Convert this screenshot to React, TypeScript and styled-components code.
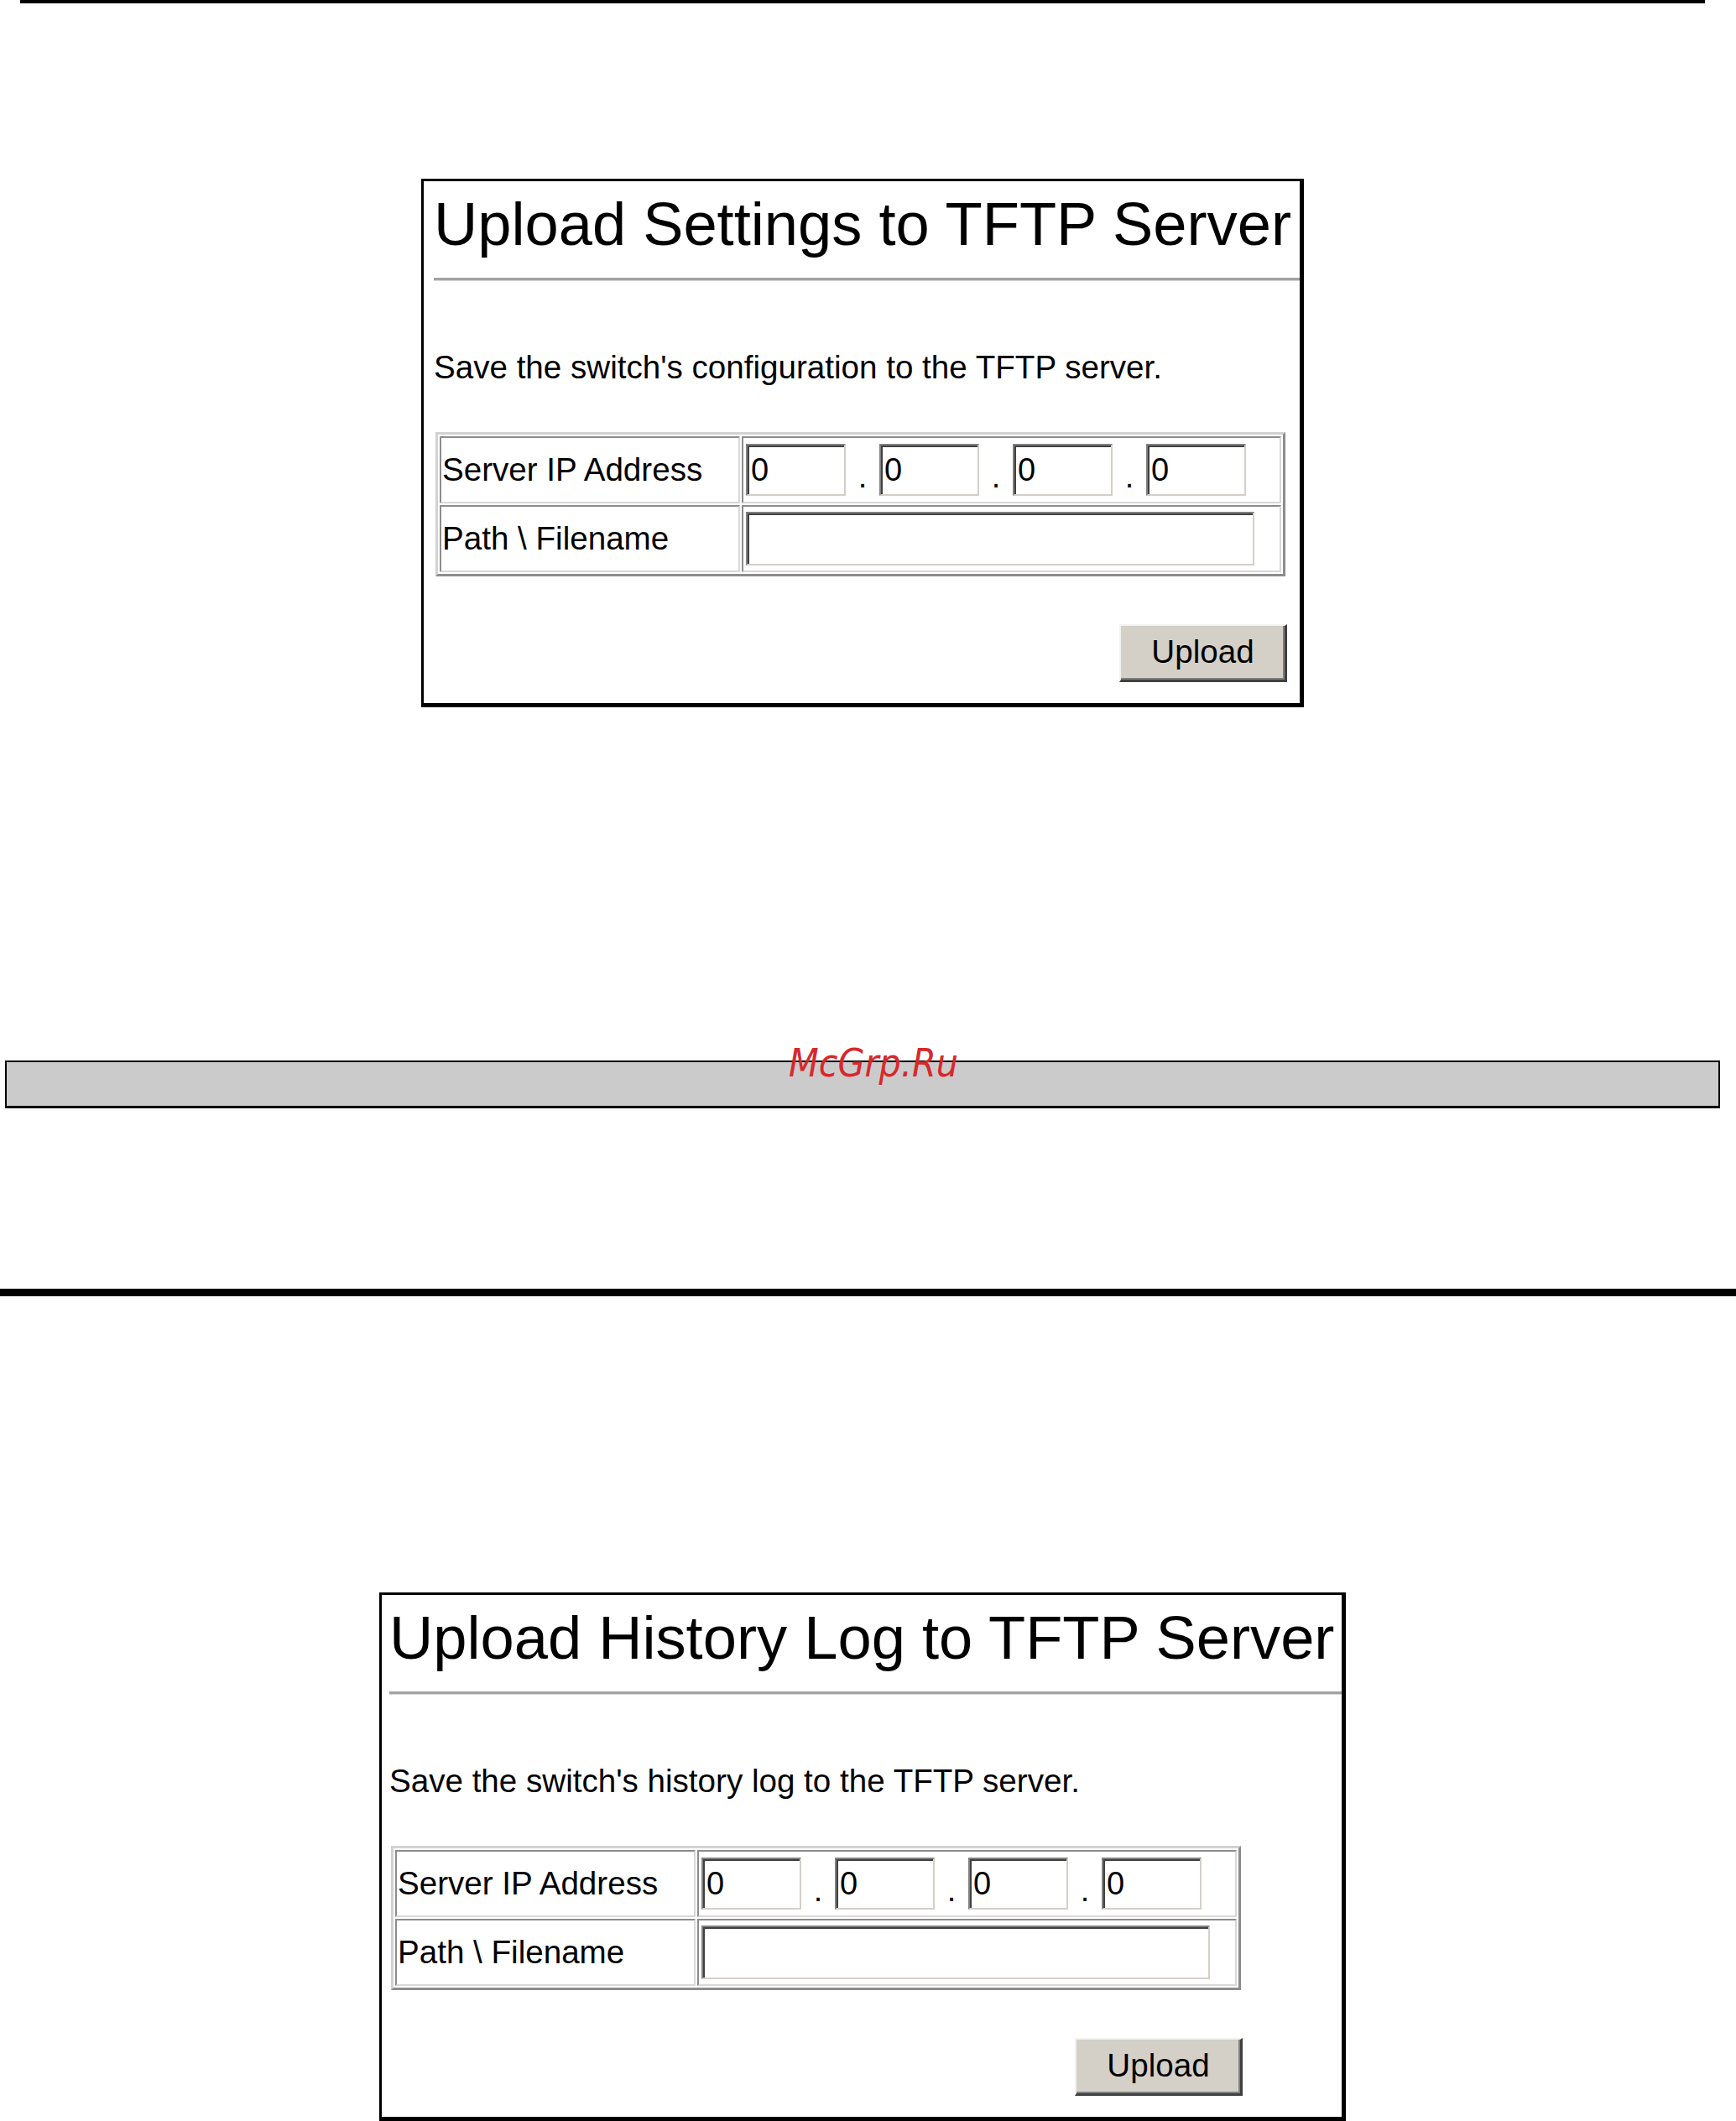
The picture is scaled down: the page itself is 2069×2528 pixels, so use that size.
import React from 'react';
import styled, { createGlobalStyle } from 'styled-components';

const GlobalStyle = createGlobalStyle`
    *, *::before, *::after {
        box-sizing: border-box;
    }
    html, body {
        margin: 0;
        padding: 0;
        background: #ffffff;
        overflow: hidden;
    }
    body {
        font-family: "Liberation Sans", Arial, sans-serif;
        color: #000000;
    }
`

const Page = styled.div`
    width: 2069px;
    display: flex;
    flex-direction: column;
`

const TopRule = styled.div`
    height: 4px;
    margin: 0 37px 0 24px;
    background: #000000;
`

const PanelRow = styled.div<{ $gap: number }>`
    margin: ${p => p.$gap}px 37px 0 24px;
    display: flex;
    justify-content: center;
`

const Panel = styled.div<{ $width: number; $padLeft: number }>`
    width: ${p => p.$width}px;
    border-style: solid;
    border-color: #000000;
    border-width: 3px 5px 5px 3px;
    padding: 15px 0 25px ${p => p.$padLeft}px;
    display: flex;
    flex-direction: column;
    background: #ffffff;
    overflow: hidden;
`

const Title = styled.h1`
    margin: 0;
    font-size: 72.3px;
    line-height: 72px;
    font-weight: 400;
    white-space: nowrap;
`

const TitleRule = styled.div`
    margin-top: 28px;
    height: 4px;
    border-top: 3px solid #a2a2a2;
    border-bottom: 1px solid #d6d6d6;
`

const Description = styled.p`
    margin: 84px 0 0;
    font-size: 38.6px;
    line-height: 38px;
    white-space: nowrap;
`

const Form = styled.div`
    margin: 58px 0 0 2px;
    width: 1013px;
    display: flex;
    flex-direction: column;
`

const FieldTable = styled.table`
    width: 1013px;
    border-collapse: separate;
    border-spacing: 2px;
    border-style: solid;
    border-width: 3px;
    border-color: #d2d2d2 #8c8c8c #8c8c8c #d2d2d2;
    table-layout: fixed;
`

const Cell = styled.td`
    height: 80px;
    padding: 0;
    border-style: solid;
    border-width: 2px;
    border-color: #8c8c8c #d8d8d8 #d8d8d8 #8c8c8c;
    vertical-align: middle;
`

const LabelCell = styled(Cell)`
    width: 358px;
    padding-left: 1px;
    font-size: 38.6px;
    line-height: 38px;
    white-space: nowrap;
`

const ValueCell = styled(Cell)`
    width: 643px;
    padding-left: 3px;
`

const IpRow = styled.div`
    display: flex;
    align-items: flex-end;
`

const TextBox = styled.input<{ $width: number; $height: number }>`
    width: ${p => p.$width}px;
    height: ${p => p.$height}px;
    margin: 0;
    padding: 0 0 0 4px;
    border-style: solid;
    border-width: 2px;
    border-color: #808080 #d4d0c8 #d4d0c8 #808080;
    box-shadow: inset 2px 2px 0 #404040;
    background: #ffffff;
    font-family: "Liberation Sans", Arial, sans-serif;
    font-size: 38px;
    color: #000000;
    outline: none;
    display: block;
`

const Dot = styled.span`
    width: 40px;
    text-align: center;
    font-size: 38px;
    line-height: 38px;
    padding-bottom: 4px;
`

const ButtonRow = styled.div`
    margin-top: 57px;
    display: flex;
    justify-content: flex-end;
`

const UploadButton = styled.button`
    width: 200px;
    height: 69px;
    margin: 0 -2px 0 0;
    padding: 0 0 2px;
    background: #d4d0c8;
    border-style: solid;
    border-width: 2px 3px 3px 2px;
    border-color: #f2f2f2 #404040 #404040 #f2f2f2;
    box-shadow: inset -2px -2px 0 #808080;
    font-family: "Liberation Sans", Arial, sans-serif;
    font-size: 38.6px;
    line-height: 38px;
    color: #000000;
`

const BarWrap = styled.div`
    position: relative;
    margin: 421px 19px 0 6px;
`

const GreyBar = styled.div`
    height: 57px;
    background: #cbcbcb;
    border-style: solid;
    border-color: #000000;
    border-width: 2px 2px 3px 2px;
`

const Watermark = styled.span`
    position: absolute;
    left: 934px;
    top: -20px;
    font-family: "DejaVu Sans Condensed", "DejaVu Sans", sans-serif;
    font-stretch: condensed;
    font-style: italic;
    font-size: 46px;
    line-height: 46px;
    color: #d8282c;
    white-space: nowrap;
`

const HeavyRule = styled.div`
    margin-top: 215px;
    height: 9px;
    background: #000000;
`

type UploadPanelProps = {
    title: string;
    text: string;
    width: number;
    padLeft: number;
    gap: number;
};

const UploadPanel = ({ title, text, width, padLeft, gap }: UploadPanelProps) => {
    const octets = [0, 1, 2, 3];
    return (
        <PanelRow $gap={gap}>
            <Panel $width={width} $padLeft={padLeft}>
                <Title>{title}</Title>
                <TitleRule />
                <Description>{text}</Description>
                <Form>
                    <FieldTable>
                        <tbody>
                            <tr>
                                <LabelCell>Server IP Address</LabelCell>
                                <ValueCell>
                                    <IpRow>
                                        {octets.map(i => (
                                            <React.Fragment key={i}>
                                                {i > 0 && <Dot>.</Dot>}
                                                <TextBox $width={119} $height={62} defaultValue="0" />
                                            </React.Fragment>
                                        ))}
                                    </IpRow>
                                </ValueCell>
                            </tr>
                            <tr>
                                <LabelCell>Path \ Filename</LabelCell>
                                <ValueCell>
                                    <TextBox $width={606} $height={64} defaultValue="" />
                                </ValueCell>
                            </tr>
                        </tbody>
                    </FieldTable>
                    <ButtonRow>
                        <UploadButton>Upload</UploadButton>
                    </ButtonRow>
                </Form>
            </Panel>
        </PanelRow>
    );
};

const App = () => {
    return (
        <Page>
            <GlobalStyle />
            <TopRule />
            <UploadPanel
                gap={209}
                width={1052}
                padLeft={12}
                title="Upload Settings to TFTP Server"
                text="Save the switch's configuration to the TFTP server."
            />
            <BarWrap>
                <GreyBar />
                <Watermark>McGrp.Ru</Watermark>
            </BarWrap>
            <HeavyRule />
            <UploadPanel
                gap={353}
                width={1152}
                padLeft={9}
                title="Upload History Log to TFTP Server"
                text="Save the switch's history log to the TFTP server."
            />
        </Page>
    );
};

export default App;
